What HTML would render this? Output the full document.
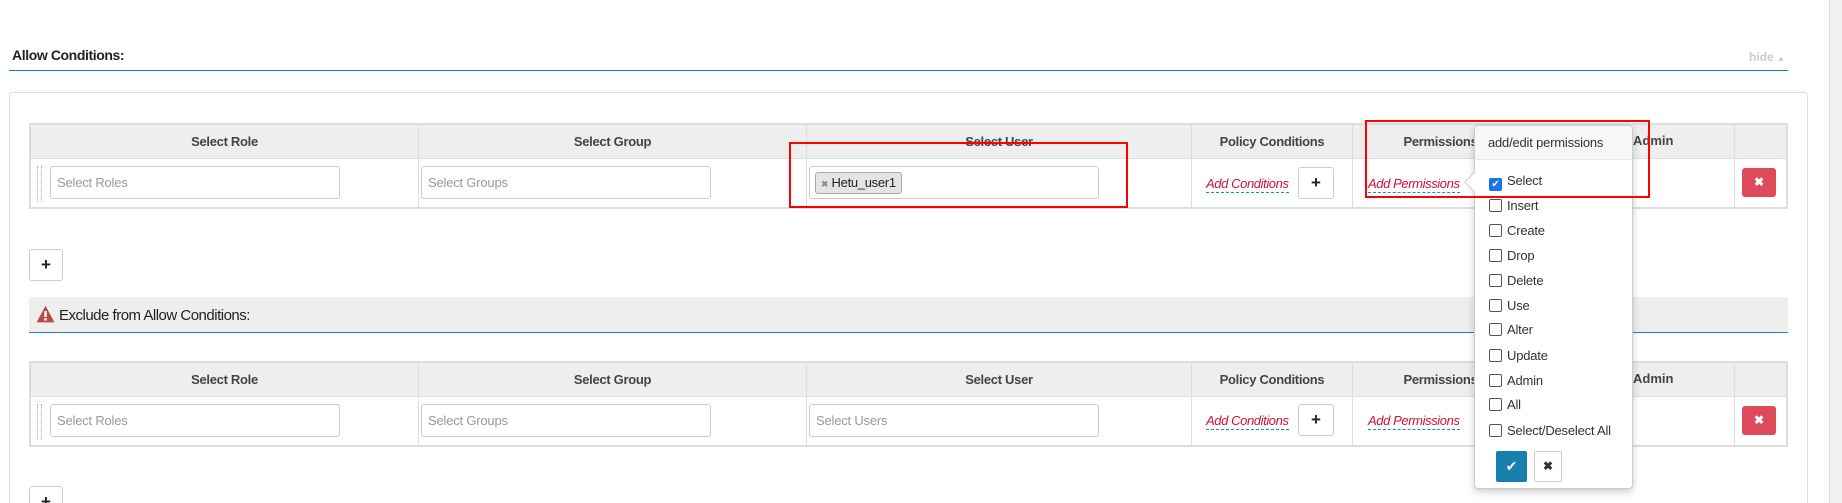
<!DOCTYPE html>
<html><head><meta charset="utf-8"><style>
*{box-sizing:border-box;margin:0;padding:0}
html,body{width:1842px;height:503px;overflow:hidden;background:#fff;position:relative}
body{font-family:"Liberation Sans",sans-serif;color:#333}
.a{position:absolute}
.th{position:absolute;top:0;height:34px;line-height:34px;text-align:center;font-size:13px;font-weight:bold;color:#444;border-right:1px solid #ddd;letter-spacing:-0.3px}
.td{position:absolute;top:34px;height:49px;border-right:1px solid #ddd}
.inp{position:absolute;height:33px;border:1px solid #ccc;border-radius:3px;font-size:13px;color:#999;line-height:31px;padding-left:6px;background:#fff;letter-spacing:-0.2px}
.btn{position:absolute;border:1px solid #ccc;border-radius:3px;background:#fff;text-align:center;font-weight:bold;font-size:17px;line-height:29px;color:#222}
.lnk{position:absolute;font-size:13px;font-style:italic;color:#d0103a;border-bottom:1px dashed #1a8ad4;line-height:16px;letter-spacing:-0.4px}
.del{position:absolute;width:34px;height:29px;background:#de4a5a;border-radius:3px;color:#fff;text-align:center;font-size:12px;line-height:29px;font-weight:bold}
.drag{position:absolute;left:6px;top:7px;width:5px;height:36px;border-left:1px dotted #aaa;border-right:1px dotted #aaa}
.it{position:absolute;left:14px;font-size:13px;color:#333;height:16px;line-height:16px;letter-spacing:-0.2px}
.cb{display:inline-block;width:13px;height:13px;border:1px solid #555;border-radius:2px;vertical-align:-2px;margin-right:5px;background:#fff}
</style></head><body>
<div class="a" style="left:12px;top:47px;font-size:14px;font-weight:bold;color:#222;letter-spacing:-0.4px">Allow Conditions:</div>
<div class="a" style="left:1749px;top:50px;font-size:12px;color:#ccc;font-weight:bold">hide <span style="font-size:8px">▲</span></div>
<div class="a" style="left:9px;top:70px;width:1779px;height:1px;background:#1f77a8"></div>
<div class="a" style="left:1829px;top:0;width:13px;height:503px;background:#f1f1f1;border-left:1px solid #ddd"></div>
<div class="a" style="left:9px;top:92px;width:1799px;height:411px;border:1px solid #ddd;border-bottom:none;border-radius:4px 4px 0 0"></div>

<div class="a" style="left:29px;top:123px;width:1759px;height:86px;border:2px solid #ddd;background:#fff">
<div class="a" style="left:0;top:0;width:1755px;height:34px;background:#eee;border-bottom:1px solid #ddd"></div>
<div class="th" style="left:0;width:388px">Select Role</div>
<div class="th" style="left:388px;width:388px">Select Group</div>
<div class="th" style="left:776px;width:385px">Select User</div>
<div class="th" style="left:1161px;width:161px">Policy Conditions</div>
<div class="th" style="left:1322px;width:176px">Permissions</div>
<div class="th" style="left:1498px;width:206px"></div>
<div class="td" style="left:0;width:388px"><div class="drag"></div></div>
<div class="td" style="left:388px;width:388px"></div>
<div class="td" style="left:776px;width:385px"></div>
<div class="td" style="left:1161px;width:161px"></div>
<div class="td" style="left:1322px;width:176px"></div>
<div class="td" style="left:1498px;width:206px"></div>
<div class="inp" style="left:19px;top:41px;width:290px">Select Roles</div>
<div class="inp" style="left:390px;top:41px;width:290px">Select Groups</div>
<div class="inp" style="left:778px;top:41px;width:290px;padding-left:5px"><span style="display:inline-block;margin-top:4px;height:22px;line-height:20px;border:1px solid #aaa;border-radius:3px;background:#e4e4e4;color:#222;padding:0 5px;font-size:13px;letter-spacing:-0.3px"><span style="color:#888;font-size:9px">✖</span> Hetu_user1</span></div>
<div class="lnk" style="left:1175px;top:51px">Add Conditions</div>
<div class="btn" style="left:1267px;top:42px;width:36px;height:32px">+</div>
<div class="lnk" style="left:1337px;top:51px">Add Permissions</div>
<div class="del" style="left:1711px;top:43px">✖</div>
</div>
<div class="a" style="left:789px;top:142px;width:339px;height:66px;border:2px solid #f00"></div>

<div class="btn" style="left:29px;top:249px;width:34px;height:32px">+</div>

<div class="a" style="left:29px;top:297px;width:1759px;height:36px;background:#eee;border-bottom:1px solid #1f85b8"></div>
<div class="a" style="left:36px;top:305px"><svg width="19" height="18" viewBox="0 0 16 15"><path d="M8 0.5L15.5 14.5H0.5Z" fill="#b94a48"/><rect x="7" y="5" width="2" height="5" fill="#fff"/><rect x="7" y="11" width="2" height="2" fill="#fff"/></svg></div>
<div class="a" style="left:59px;top:307px;font-size:15px;color:#222;letter-spacing:-0.5px">Exclude from Allow Conditions:</div>

<div class="a" style="left:29px;top:361px;width:1759px;height:86px;border:2px solid #ddd;background:#fff">
<div class="a" style="left:0;top:0;width:1755px;height:34px;background:#eee;border-bottom:1px solid #ddd"></div>
<div class="th" style="left:0;width:388px">Select Role</div>
<div class="th" style="left:388px;width:388px">Select Group</div>
<div class="th" style="left:776px;width:385px">Select User</div>
<div class="th" style="left:1161px;width:161px">Policy Conditions</div>
<div class="th" style="left:1322px;width:176px">Permissions</div>
<div class="th" style="left:1498px;width:206px"></div>
<div class="td" style="left:0;width:388px"><div class="drag"></div></div>
<div class="td" style="left:388px;width:388px"></div>
<div class="td" style="left:776px;width:385px"></div>
<div class="td" style="left:1161px;width:161px"></div>
<div class="td" style="left:1322px;width:176px"></div>
<div class="td" style="left:1498px;width:206px"></div>
<div class="inp" style="left:19px;top:41px;width:290px">Select Roles</div>
<div class="inp" style="left:390px;top:41px;width:290px">Select Groups</div>
<div class="inp" style="left:778px;top:41px;width:290px">Select Users</div>
<div class="lnk" style="left:1175px;top:50px">Add Conditions</div>
<div class="btn" style="left:1267px;top:41px;width:36px;height:32px">+</div>
<div class="lnk" style="left:1337px;top:50px">Add Permissions</div>
<div class="del" style="left:1711px;top:43px">✖</div>
</div>
<div class="a" style="left:29px;top:486px;width:34px;height:17px;overflow:hidden"><div class="btn" style="left:0;top:0;width:34px;height:32px">+</div></div>

<div class="a" style="left:1633px;top:131px;font-size:13px;font-weight:bold;color:#444;line-height:20px">Admin</div>
<div class="a" style="left:1633px;top:369px;font-size:13px;font-weight:bold;color:#444;line-height:20px">Admin</div>

<div class="a" style="left:1474px;top:125px;width:159px;height:364px;background:#fff;border:1px solid #ccc;border-radius:4px;box-shadow:0 3px 8px rgba(0,0,0,.2)">
<div class="a" style="left:0;top:0;width:157px;height:34px;background:#f7f7f7;border-bottom:1px solid #ebebeb;border-radius:4px 4px 0 0;font-size:13px;line-height:34px;padding-left:13px;color:#333;letter-spacing:-0.2px">add/edit permissions</div>
<div class="a" style="left:-8px;top:49px;width:14px;height:14px;background:#fff;border-left:1px solid #ccc;border-bottom:1px solid #ccc;transform:rotate(45deg)"></div>
<div class="it" style="top:47px"><span class="cb" style="background:#1a73e8;border-color:#1a73e8;color:#fff;font-size:10px;line-height:11px;text-align:center">✔</span>Select</div>
<div class="it" style="top:72px"><span class="cb"></span>Insert</div>
<div class="it" style="top:97px"><span class="cb"></span>Create</div>
<div class="it" style="top:122px"><span class="cb"></span>Drop</div>
<div class="it" style="top:147px"><span class="cb"></span>Delete</div>
<div class="it" style="top:172px"><span class="cb"></span>Use</div>
<div class="it" style="top:196px"><span class="cb"></span>Alter</div>
<div class="it" style="top:222px"><span class="cb"></span>Update</div>
<div class="it" style="top:247px"><span class="cb"></span>Admin</div>
<div class="it" style="top:271px"><span class="cb"></span>All</div>
<div class="it" style="top:297px"><span class="cb"></span>Select/Deselect All</div>
<div class="a" style="left:21px;top:325px;width:31px;height:31px;background:#167fae;border-radius:2px;color:#fff;text-align:center;line-height:31px;font-size:14px">✔</div>
<div class="a" style="left:59px;top:325px;width:28px;height:31px;border:1px solid #ccc;border-radius:2px;text-align:center;line-height:29px;font-size:12px;font-weight:bold">✖</div>
</div>
<div class="a" style="left:1365px;top:120px;width:285px;height:78px;border:2px solid #f00"></div>
</body></html>
